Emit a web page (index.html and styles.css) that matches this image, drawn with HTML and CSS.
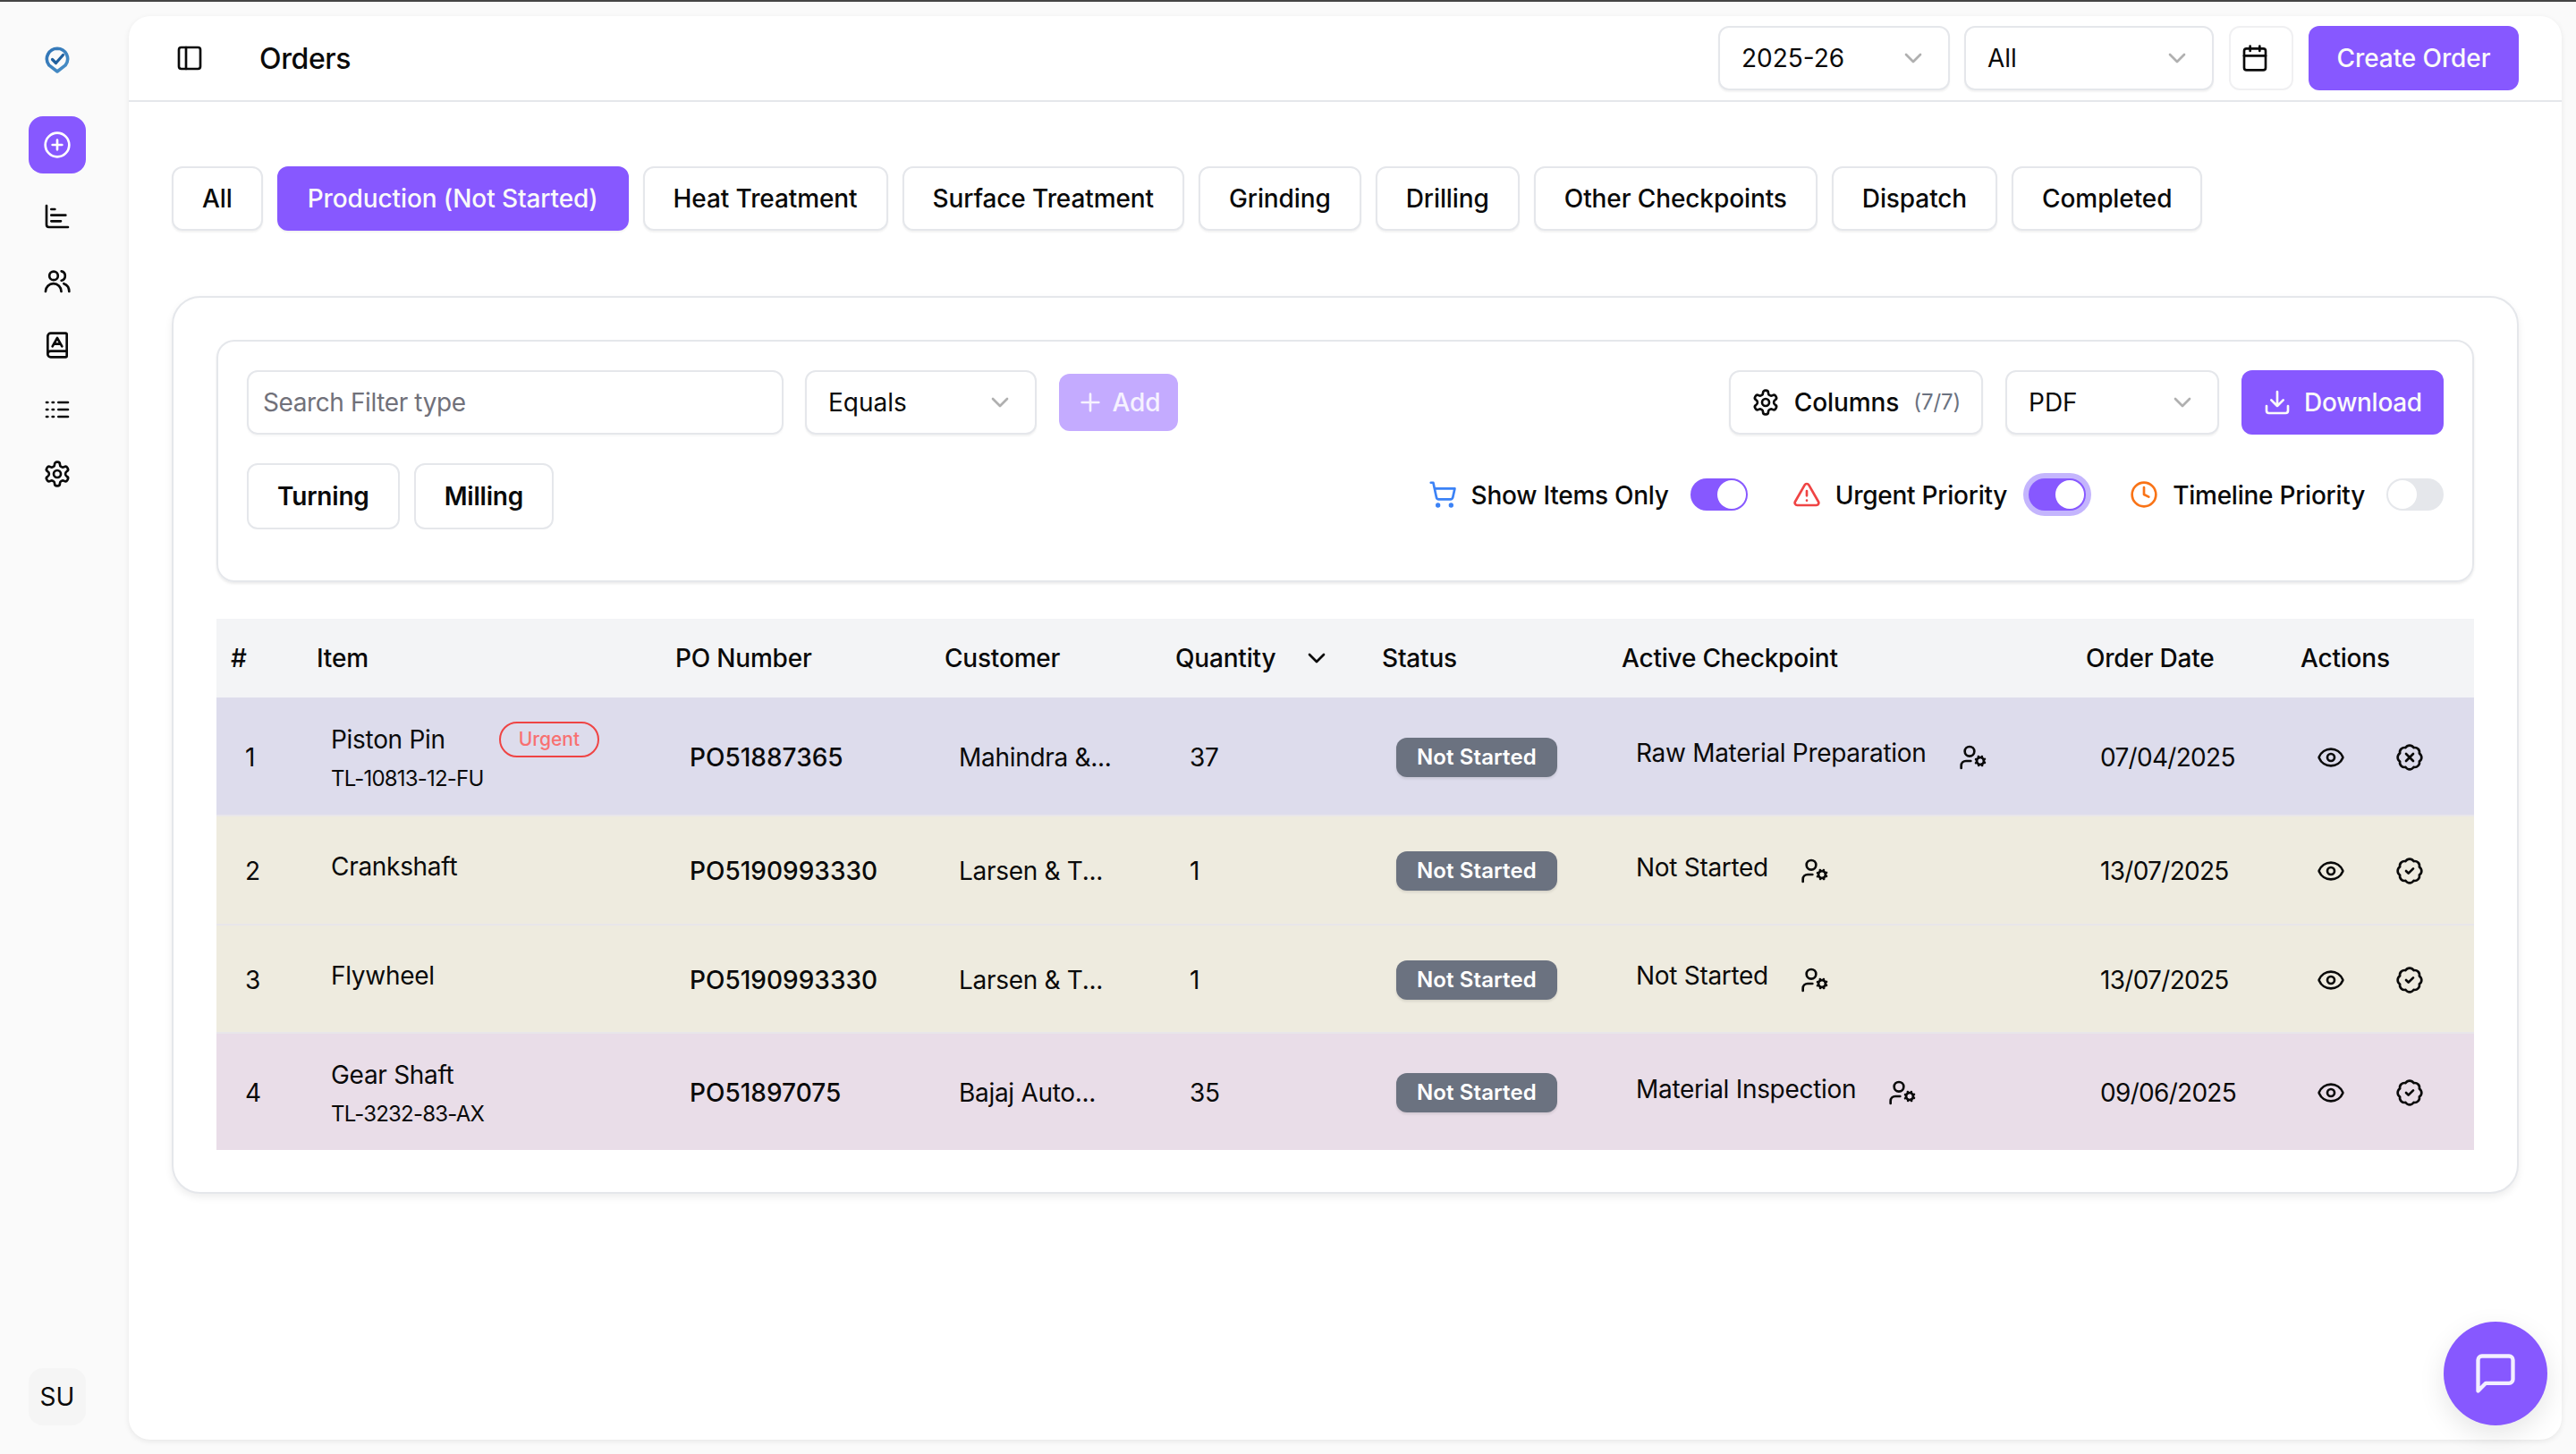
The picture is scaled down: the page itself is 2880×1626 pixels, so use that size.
FILE: index.html
```html
<!DOCTYPE html>
<html lang="en">
<head>
<meta charset="utf-8">
<title>Orders</title>
<link rel="stylesheet" href="styles.css">
</head>
<body>
<svg class="sprite" aria-hidden="true">
  <defs>
    <linearGradient id="logo-grad" x1="0" y1="0" x2="1" y2="1">
      <stop offset="0" stop-color="#2f73b5"/>
      <stop offset="1" stop-color="#4a90c8"/>
    </linearGradient>
  </defs>
  <symbol id="i-plus-circle" viewBox="0 0 24 24"><circle cx="12" cy="12" r="10"/><path d="M8 12h8M12 8v8"/></symbol>
  <symbol id="i-chart" viewBox="0 0 24 24"><path d="M3 3v16a2 2 0 0 0 2 2h16M7 16h8M7 11h12M7 6h3"/></symbol>
  <symbol id="i-users" viewBox="0 0 24 24"><circle cx="9" cy="7.8" r="3.6"/><path d="M2.2 21a6.6 6.6 0 0 1 13.2 0"/><path d="M15.5 4a4 4 0 0 1 0 7.8"/><path d="M22 21c0-3-1.5-5.5-4.5-6.6"/></symbol>
  <symbol id="i-book" viewBox="0 0 24 24"><path d="M4 19.5v-15A2.5 2.5 0 0 1 6.5 2H19a1 1 0 0 1 1 1v18a1 1 0 0 1-1 1H6.5a1 1 0 0 1 0-5H20"/><path d="m8 13 4-7 4 7M9.1 11h5.7"/></symbol>
  <symbol id="i-logs" viewBox="0 0 24 24"><path d="M13 12h8M13 18h8M13 6h8M3 12h1M3 18h1M3 6h1M8 12h1M8 18h1M8 6h1"/></symbol>
  <symbol id="i-gear" viewBox="0 0 24 24"><path d="M12.22 2h-.44a2 2 0 0 0-2 2v.18a2 2 0 0 1-1 1.73l-.43.25a2 2 0 0 1-2 0l-.15-.08a2 2 0 0 0-2.73.73l-.22.38a2 2 0 0 0 .73 2.73l.15.1a2 2 0 0 1 1 1.72v.51a2 2 0 0 1-1 1.74l-.15.09a2 2 0 0 0-.73 2.73l.22.38a2 2 0 0 0 2.73.73l.15-.08a2 2 0 0 1 2 0l.43.25a2 2 0 0 1 1 1.73V20a2 2 0 0 0 2 2h.44a2 2 0 0 0 2-2v-.18a2 2 0 0 1 1-1.73l.43-.25a2 2 0 0 1 2 0l.15.08a2 2 0 0 0 2.73-.73l.22-.39a2 2 0 0 0-.73-2.73l-.15-.08a2 2 0 0 1-1-1.74v-.5a2 2 0 0 1 1-1.74l.15-.09a2 2 0 0 0 .73-2.73l-.22-.38a2 2 0 0 0-2.73-.73l-.15.08a2 2 0 0 1-2 0l-.43-.25a2 2 0 0 1-1-1.73V4a2 2 0 0 0-2-2z"/><circle cx="12" cy="12" r="3"/></symbol>
  <symbol id="i-panel" viewBox="0 0 24 24"><rect x="3" y="3" width="18" height="18" rx="2"/><path d="M9 3v18"/></symbol>
  <symbol id="i-chevron" viewBox="0 0 24 24"><path d="m6 9 6 6 6-6"/></symbol>
  <symbol id="i-calendar" viewBox="0 0 24 24"><path d="M8 2v4M16 2v4"/><rect x="3" y="4" width="18" height="18" rx="2"/><path d="M3 10h18"/></symbol>
  <symbol id="i-plus" viewBox="0 0 24 24"><path d="M5 12h14M12 5v14"/></symbol>
  <symbol id="i-download" viewBox="0 0 24 24"><path d="M21 15v4a2 2 0 0 1-2 2H5a2 2 0 0 1-2-2v-4"/><path d="m7 10 5 5 5-5M12 15V3"/></symbol>
  <symbol id="i-cart" viewBox="0 0 24 24"><circle cx="8" cy="21" r="1"/><circle cx="19" cy="21" r="1"/><path d="M2.05 2.05h2l2.66 12.42a2 2 0 0 0 2 1.58h9.78a2 2 0 0 0 1.95-1.57l1.65-7.43H5.12"/></symbol>
  <symbol id="i-alert" viewBox="0 0 24 24"><path d="m21.73 18-8-14a2 2 0 0 0-3.48 0l-8 14A2 2 0 0 0 4 21h16a2 2 0 0 0 1.73-3"/><path d="M12 9v4M12 17h.01"/></symbol>
  <symbol id="i-clock" viewBox="0 0 24 24"><circle cx="12" cy="12" r="10"/><path d="M12 6v6l4 2"/></symbol>
  <symbol id="i-user-cog" viewBox="0 0 24 24"><circle cx="18" cy="15" r="3"/><circle cx="9" cy="7" r="4"/><path d="M10 15H6a4 4 0 0 0-4 4v2"/><path d="m21.7 16.4-.9-.3M15.2 13.9l-.9-.3M16.6 18.7l.3-.9M19.1 12.2l.3-.9M19.6 18.7l-.4-1M16.8 12.3l-.4-1M14.3 16.6l1-.4M20.7 13.8l1-.4"/></symbol>
  <symbol id="i-eye" viewBox="0 0 24 24"><path d="M2.062 12.348a1 1 0 0 1 0-.696 10.75 10.75 0 0 1 19.876 0 1 1 0 0 1 0 .696 10.75 10.75 0 0 1-19.876 0"/><circle cx="12" cy="12" r="3"/></symbol>
  <symbol id="i-badge-check" viewBox="0 0 24 24"><path d="M3.85 8.62a4 4 0 0 1 4.78-4.77 4 4 0 0 1 6.74 0 4 4 0 0 1 4.78 4.78 4 4 0 0 1 0 6.74 4 4 0 0 1-4.77 4.78 4 4 0 0 1-6.75 0 4 4 0 0 1-4.78-4.77 4 4 0 0 1 0-6.76Z"/><path d="m9 12 2 2 4-4"/></symbol>
  <symbol id="i-badge-x" viewBox="0 0 24 24"><path d="M3.85 8.62a4 4 0 0 1 4.78-4.77 4 4 0 0 1 6.74 0 4 4 0 0 1 4.78 4.78 4 4 0 0 1 0 6.74 4 4 0 0 1-4.77 4.78 4 4 0 0 1-6.75 0 4 4 0 0 1-4.78-4.77 4 4 0 0 1 0-6.76Z"/><path d="m15 9-6 6M9 9l6 6"/></symbol>
  <symbol id="i-message" viewBox="0 0 24 24"><path d="M21 15a2 2 0 0 1-2 2H7l-4 4V5a2 2 0 0 1 2-2h14a2 2 0 0 1 2 2z"/></symbol>
</svg>

<div class="topline"></div>
<div class="shell">
  <aside class="sidebar">
    <svg class="logo" viewBox="0 0 28 30" aria-label="Logo">
      <path class="logo-ring" d="M14 2.2a11.6 11.6 0 0 0-9.2 18.6L14 28l9.2-7.2A11.6 11.6 0 0 0 14 2.2Z"/>
      <path class="logo-check" d="m8.5 14.5 4 4 8-9"/>
    </svg>
    <button class="side-add"><svg class="ic ic-32"><use href="#i-plus-circle"/></svg></button>
    <nav class="side-nav">
      <svg class="ic ic-32"><use href="#i-chart"/></svg>
      <svg class="ic ic-32"><use href="#i-users"/></svg>
      <svg class="ic ic-32"><use href="#i-book"/></svg>
      <svg class="ic ic-32"><use href="#i-logs"/></svg>
      <svg class="ic ic-32"><use href="#i-gear"/></svg>
    </nav>
    <div class="avatar">SU</div>
  </aside>

  <main class="main">
    <header class="topbar">
      <svg class="ic ic-32 panel-toggle"><use href="#i-panel"/></svg>
      <h1 class="page-title">Orders</h1>
      <div class="topbar-actions">
        <div class="select select-year"><span>2025-26</span><svg class="ic ic-32 chev"><use href="#i-chevron"/></svg></div>
        <div class="select select-all"><span>All</span><svg class="ic ic-32 chev"><use href="#i-chevron"/></svg></div>
        <button class="cal-btn"><svg class="ic ic-32"><use href="#i-calendar"/></svg></button>
        <button class="btn-primary btn-create">Create Order</button>
      </div>
    </header>

    <div class="content">
      <div class="tabs">
        <button class="tab">All</button>
        <button class="tab tab-active">Production (Not Started)</button>
        <button class="tab">Heat Treatment</button>
        <button class="tab">Surface Treatment</button>
        <button class="tab">Grinding</button>
        <button class="tab">Drilling</button>
        <button class="tab">Other Checkpoints</button>
        <button class="tab">Dispatch</button>
        <button class="tab">Completed</button>
      </div>

      <section class="card">
        <div class="filters">
          <div class="filter-row">
            <div class="search">Search Filter type</div>
            <div class="select select-equals"><span>Equals</span><svg class="ic ic-32 chev"><use href="#i-chevron"/></svg></div>
            <button class="btn-add"><svg class="ic ic-32"><use href="#i-plus"/></svg>Add</button>
            <div class="filter-right">
              <button class="btn-columns"><svg class="ic ic-32"><use href="#i-gear"/></svg><span>Columns</span><span class="count">(7/7)</span></button>
              <div class="select select-pdf"><span>PDF</span><svg class="ic ic-32 chev"><use href="#i-chevron"/></svg></div>
              <button class="btn-primary btn-download"><svg class="ic ic-32"><use href="#i-download"/></svg>Download</button>
            </div>
          </div>
          <div class="filter-row filter-row-2">
            <div class="chips">
              <button class="chip">Turning</button>
              <button class="chip">Milling</button>
            </div>
            <div class="toggles">
              <div class="toggle-item item-cart"><svg class="ic ic-32 blue"><use href="#i-cart"/></svg><span class="toggle-label">Show Items Only</span><span class="switch on"></span></div>
              <div class="toggle-item item-urgent"><svg class="ic ic-32 red"><use href="#i-alert"/></svg><span class="toggle-label">Urgent Priority</span><span class="switch on focus"></span></div>
              <div class="toggle-item item-time"><svg class="ic ic-32 orange"><use href="#i-clock"/></svg><span class="toggle-label">Timeline Priority</span><span class="switch"></span></div>
            </div>
          </div>
        </div>

        <table class="orders">
          <colgroup>
            <col class="c-num"><col class="c-item"><col class="c-po"><col class="c-cust"><col class="c-qty"><col class="c-status"><col class="c-check"><col class="c-date"><col class="c-act">
          </colgroup>
          <thead>
            <tr>
              <th>#</th><th>Item</th><th>PO Number</th><th>Customer</th>
              <th><span class="th-sort">Quantity<svg class="ic ic-32"><use href="#i-chevron"/></svg></span></th>
              <th>Status</th><th>Active Checkpoint</th><th>Order Date</th><th>Actions</th>
            </tr>
          </thead>
          <tbody>
            <tr class="row-indigo">
              <td>1</td>
              <td><div class="name-line">Piston Pin<span class="urgent">Urgent</span></div><div class="sub">TL-10813-12-FU</div></td>
              <td class="po">PO51887365</td><td>Mahindra &amp;...</td><td>37</td>
              <td><span class="status">Not Started</span></td>
              <td><div class="check"><span>Raw Material Preparation</span><svg class="ic ic-32"><use href="#i-user-cog"/></svg></div></td>
              <td class="date">07/04/2025</td>
              <td><div class="actions"><svg class="ic ic-32"><use href="#i-eye"/></svg><svg class="ic ic-32"><use href="#i-badge-x"/></svg></div></td>
            </tr>
            <tr class="row-sand">
              <td>2</td>
              <td><div class="name-line">Crankshaft</div></td>
              <td class="po">PO5190993330</td><td>Larsen &amp; T...</td><td>1</td>
              <td><span class="status">Not Started</span></td>
              <td><div class="check"><span>Not Started</span><svg class="ic ic-32"><use href="#i-user-cog"/></svg></div></td>
              <td class="date">13/07/2025</td>
              <td><div class="actions"><svg class="ic ic-32"><use href="#i-eye"/></svg><svg class="ic ic-32"><use href="#i-badge-check"/></svg></div></td>
            </tr>
            <tr class="row-sand row-sand-b">
              <td>3</td>
              <td><div class="name-line">Flywheel</div></td>
              <td class="po">PO5190993330</td><td>Larsen &amp; T...</td><td>1</td>
              <td><span class="status">Not Started</span></td>
              <td><div class="check"><span>Not Started</span><svg class="ic ic-32"><use href="#i-user-cog"/></svg></div></td>
              <td class="date">13/07/2025</td>
              <td><div class="actions"><svg class="ic ic-32"><use href="#i-eye"/></svg><svg class="ic ic-32"><use href="#i-badge-check"/></svg></div></td>
            </tr>
            <tr class="row-mauve">
              <td>4</td>
              <td><div class="name-line">Gear Shaft</div><div class="sub">TL-3232-83-AX</div></td>
              <td class="po">PO51897075</td><td>Bajaj Auto...</td><td>35</td>
              <td><span class="status">Not Started</span></td>
              <td><div class="check"><span>Material Inspection</span><svg class="ic ic-32"><use href="#i-user-cog"/></svg></div></td>
              <td class="date">09/06/2025</td>
              <td><div class="actions"><svg class="ic ic-32"><use href="#i-eye"/></svg><svg class="ic ic-32"><use href="#i-badge-check"/></svg></div></td>
            </tr>
          </tbody>
        </table>
      </section>
    </div>
  </main>
</div>
<button class="fab" aria-label="Chat"><svg class="ic ic-52"><use href="#i-message"/></svg></button>
</body>
</html>
```
FILE: styles.css
```css
* { box-sizing: border-box; }
html, body { margin: 0; padding: 0; }
body {
  width: 2880px; height: 1626px; overflow: hidden;
  display: flex; flex-direction: column;
  background: #fafafa; color: #0a0a0a;
  font-family: Inter, "Liberation Sans", sans-serif;
  font-size: 28px; line-height: 40px; letter-spacing: -0.4px;
}
button { font: inherit; color: inherit; cursor: pointer; letter-spacing: inherit; }
.sprite { position: absolute; width: 0; height: 0; overflow: hidden; }
.ic { display: block; flex: none; fill: none; stroke: currentColor; stroke-width: 2; stroke-linecap: round; stroke-linejoin: round; }
.ic-32 { width: 32px; height: 32px; }
.ic-52 { width: 52px; height: 52px; }
.blue { color: #3b82f6; }
.red { color: #ef4444; }
.orange { color: #f97316; }

.topline { height: 2px; background: #444; flex: none; }
.shell { flex: 1; display: flex; min-height: 0; }

/* Sidebar */
.sidebar { width: 128px; flex: none; display: flex; flex-direction: column; align-items: center; padding: 50px 0 32px; }
.logo { width: 28px; height: 30px; margin-bottom: 48px; }
.logo-ring { fill: none; stroke: url(#logo-grad); stroke-width: 3.6; stroke-linejoin: round; }
.logo-check { fill: none; stroke: #1f5f9e; stroke-width: 3.2; stroke-linecap: round; stroke-linejoin: round; }
.side-add { width: 64px; height: 64px; border: 0; border-radius: 16px; background: #8758ff; color: #fff; display: flex; align-items: center; justify-content: center; padding: 0; }
.side-nav { display: flex; flex-direction: column; gap: 40px; margin-top: 32px; }
.avatar { margin-top: auto; width: 64px; height: 64px; border-radius: 16px; background: #f5f5f5; display: flex; align-items: center; justify-content: center; letter-spacing: 0; }

/* Main */
.main { flex: 1; margin: 16px 16px 16px 16px; background: #fff; border-radius: 24px; box-shadow: 0 2px 6px rgba(0,0,0,.08); min-width: 0; overflow: hidden; }
.topbar { height: 96px; border-bottom: 2px solid #e5e7eb; display: flex; align-items: center; padding: 0 48px 0 52px; }
.panel-toggle { margin-right: 62px; }
.page-title { margin: 0; padding-top: 2px; font-size: 32px; font-weight: 500; line-height: 40px; letter-spacing: -0.4px; }
.topbar-actions { margin-left: auto; display: flex; align-items: center; }

.select { height: 72px; border: 2px solid #e5e7eb; border-radius: 12px; background: #fff; box-shadow: 0 2px 2px rgba(0,0,0,.05); display: flex; align-items: center; justify-content: space-between; padding: 0 23px 0 24px; letter-spacing: 0; }
.chev { color: #b0b0b0; }
.select-year { width: 259px; margin-right: 16px; }
.select-all { width: 279px; margin-right: 17px; }
.cal-btn { width: 72px; height: 72px; border: 2px solid #f0f0f2; border-radius: 12px; background: #fff; padding: 0 0 0 11px; margin-right: 17px; display: flex; align-items: center; }
.btn-primary { height: 72px; border: 0; border-radius: 12px; background: #8758ff; color: #fafafa; font-weight: 500; letter-spacing: -0.1px; display: flex; align-items: center; justify-content: center; padding: 0; }
.btn-create { width: 235px; }

.content { padding: 72px 48px 0; }
.tabs { display: flex; gap: 16px; margin-bottom: 73px; }
.tab { height: 72px; padding: 0 32px; border: 2px solid #e5e7eb; border-radius: 12px; background: #fff; font-weight: 500; letter-spacing: -0.1px; box-shadow: 0 2px 2px rgba(0,0,0,.05); white-space: nowrap; }
.tab-active { background: #8758ff; border-color: #8758ff; color: #fafafa; }

.card { background: #fff; border: 2px solid #e5e7eb; border-radius: 32px; padding: 47px 48px 46px; box-shadow: 0 4px 8px rgba(0,0,0,.07); height: 1004px; }
.filters { height: 271px; border: 2px solid #e5e7eb; border-radius: 20px; padding: 32px; box-shadow: 0 2px 3px rgba(0,0,0,.08); margin-bottom: 41px; }
.filter-row { display: flex; align-items: center; }
.search { width: 600px; height: 72px; border: 2px solid #e5e7eb; border-radius: 12px; padding: 0 16px; display: flex; align-items: center; color: #71717a; box-shadow: 0 2px 2px rgba(0,0,0,.03); margin-right: 24px; }
.select-equals { width: 259px; margin-right: 25px; }
.btn-add { width: 133px; height: 64px; border: 0; border-radius: 12px; background: #c4abff; color: #f6f2ff; font-weight: 500; letter-spacing: 0; display: flex; align-items: center; justify-content: center; gap: 8px; padding: 0; }
.filter-right { margin-left: auto; display: flex; align-items: center; }
.btn-columns { width: 284px; height: 72px; border: 2px solid #e5e7eb; border-radius: 12px; background: #fff; font-weight: 500; letter-spacing: -0.1px; display: flex; align-items: center; justify-content: center; gap: 16px; padding: 0; box-shadow: 0 2px 2px rgba(0,0,0,.05); margin-right: 25px; }
.count { color: #6b7280; font-size: 24px; font-weight: 400; }
.select-pdf { width: 239px; margin-right: 25px; }
.btn-download { width: 226px; gap: 14px; letter-spacing: -0.3px; }

.filter-row-2 { margin-top: 32px; justify-content: space-between; }
.chips { display: flex; gap: 16px; }
.chip { height: 74px; padding: 0 32px; border: 2px solid #e5e7eb; border-radius: 12px; background: #fff; font-weight: 600; letter-spacing: -0.2px; }
.toggles { display: flex; align-items: center; margin-bottom: 4px; }
.toggle-item { display: flex; align-items: center; font-weight: 500; letter-spacing: -0.25px; }
.toggle-item svg { margin-right: 16px; }
.toggle-label { padding-top: 2px; }
.item-cart { margin-right: 50px; }
.item-urgent { margin-right: 49px; }
.switch { width: 64px; height: 36px; border-radius: 18px; background: #e5e7eb; display: flex; align-items: center; padding: 2px; margin-left: 24px; }
.switch::before { content: ""; width: 32px; height: 32px; border-radius: 50%; background: #fff; }
.switch.on { background: #8758ff; justify-content: flex-end; }
.switch.focus { box-shadow: 0 0 0 6px #c4b5fd; }

/* Table */
.orders { width: 100%; border-collapse: collapse; table-layout: fixed; }
.c-num { width: 96px; }
.c-item { width: 401px; }
.c-po { width: 301px; }
.c-cust { width: 258px; }
.c-qty { width: 231px; }
.c-status { width: 268px; }
.c-check { width: 519px; }
.c-date { width: 240px; }
.orders thead tr { height: 88px; background: #f3f4f6; }
.orders th { padding: 0 16px; text-align: left; font-weight: 500; letter-spacing: -0.2px; white-space: nowrap; }
.th-sort { display: flex; align-items: center; gap: 30px; }
.orders td { padding: 2px 32px 0; vertical-align: middle; white-space: nowrap; border-bottom: 2px solid #e8e6ea; letter-spacing: -0.3px; }
.orders tbody tr:last-child td { border-bottom: 0; }
.row-indigo { background: #dddcec; height: 132px; }
.row-sand { background: #eeebdf; height: 122px; }
.row-sand-b { height: 121px; }
.row-mauve { background: #e9dde8; height: 131px; }
.orders td.po { font-weight: 500; letter-spacing: 0; }
.orders td.date { letter-spacing: -0.7px; }
.name-line { display: flex; align-items: center; height: 40px; margin-bottom: 10px; }
.urgent { margin-left: 60px; height: 40px; padding: 0 20px; border: 2px solid #ef4444; border-radius: 20px; color: #f87171; font-size: 21px; font-weight: 500; line-height: 36px; letter-spacing: 0; }
.sub { font-size: 24px; line-height: 32px; letter-spacing: -0.8px; margin-top: -2px; }
.status { display: inline-flex; align-items: center; height: 44px; padding: 0 23px; border-radius: 12px; background: #6b7280; color: #fff; font-size: 24px; font-weight: 600; letter-spacing: 0.1px; box-shadow: 0 2px 3px rgba(0,0,0,.1); }
.check { display: flex; align-items: center; gap: 36px; }
.check span { margin-bottom: 9px; }
.actions { display: flex; gap: 56px; margin-left: 2px; }

.fab { position: fixed; left: 2732px; top: 1478px; width: 116px; height: 116px; border: 0; border-radius: 50%; background: #8758ff; color: #f3efff; display: flex; align-items: center; justify-content: center; padding: 0; box-shadow: 0 10px 30px rgba(0,0,0,.1); }
```
